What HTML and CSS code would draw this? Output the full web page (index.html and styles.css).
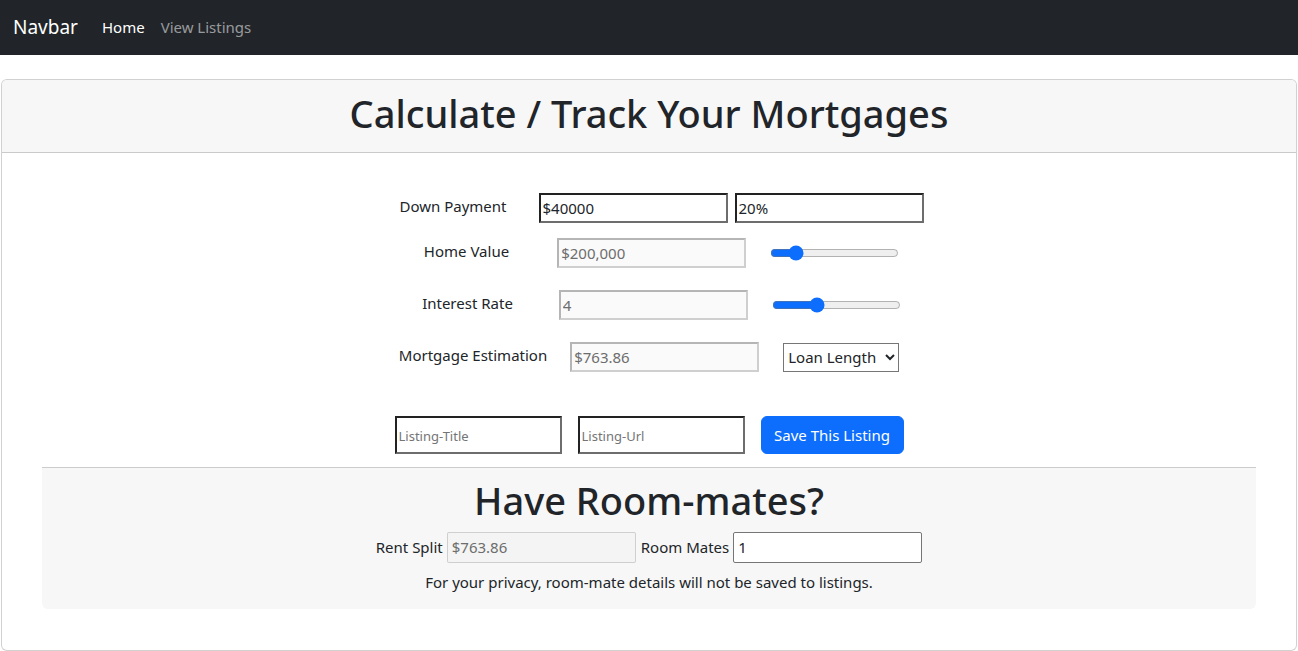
FILE: index.html
```html
<!DOCTYPE html>
<html lang="en">
<head>
<meta charset="utf-8">
<title>Mortgage Calculator</title>
<link rel="stylesheet" href="styles.css">
</head>
<body>
<nav class="navbar">
  <a class="brand" href="#">Navbar</a>
  <a class="nav-link active" href="#">Home</a>
  <a class="nav-link" href="#">View Listings</a>
</nav>
<div class="page">
  <div class="card">
    <div class="card-header">
      <h1>Calculate / Track Your Mortgages</h1>
    </div>
    <div class="card-body">
      <div class="row row-down">
        <label class="lbl lbl-down">Down Payment</label>
        <input class="inp" type="text" value="$40000">
        <input class="inp" type="text" value="20%">
      </div>
      <div class="row row-home">
        <label class="lbl lbl-home">Home Value</label>
        <input class="inp" type="text" value="$200,000" disabled>
        <input class="range" type="range" min="0" max="100" value="16">
      </div>
      <div class="row row-rate">
        <label class="lbl lbl-rate">Interest Rate</label>
        <input class="inp" type="text" value="4" disabled>
        <input class="range" type="range" min="0" max="100" value="33">
      </div>
      <div class="row row-est">
        <label class="lbl lbl-est">Mortgage Estimation</label>
        <input class="inp" type="text" value="$763.86" disabled>
        <select class="sel">
          <option>Loan Length</option>
        </select>
      </div>
      <div class="row row-save">
        <input class="inp inp-tall" type="text" placeholder="Listing-Title">
        <input class="inp inp-tall" type="text" placeholder="Listing-Url">
        <button class="btn">Save This Listing</button>
      </div>
      <div class="roommates">
        <h1>Have Room-mates?</h1>
        <div class="rm-row">
          <span>Rent Split</span>
          <input class="plain" type="text" value="$763.86" disabled>
          <span>Room Mates</span>
          <input class="plain" type="text" value="1">
        </div>
        <p class="note">For your privacy, room-mate details will not be saved to listings.</p>
      </div>
    </div>
  </div>
</div>
</body>
</html>
```
FILE: styles.css
```css
* { box-sizing: border-box; }
html, body { margin: 0; padding: 0; }
body {
  font-family: "Noto Sans", "Open Sans", sans-serif;
  font-size: 16px;
  line-height: 1.5;
  color: #212529;
  background: #fff;
}
.navbar {
  height: 55px;
  background: #212529;
  display: flex;
  align-items: center;
  padding: 0 13px;
}
.brand {
  color: #fff;
  text-decoration: none;
  font-size: 19px;
  margin-right: 24px;
}
.nav-link {
  color: rgba(255,255,255,0.55);
  text-decoration: none;
  font-size: 15px;
  margin-right: 16px;
}
.nav-link.active { color: #fff; }
.page { padding: 24px 1px 0 1px; }
.card {
  border: 1px solid rgba(0,0,0,0.18);
  border-radius: 6px;
  background: #fff;
  height: 572px;
}
.card-header {
  background: #f7f7f7;
  border-bottom: 1px solid rgba(0,0,0,0.18);
  border-radius: 5px 5px 0 0;
  height: 73px;
  text-align: center;
}
h1 {
  margin: 0;
  font-weight: 500;
  font-size: 38px;
  line-height: 1.2;
}
.card-header h1 { padding-top: 11px; }
.card-body { padding: 40px 0 0 0; }
.row {
  display: flex;
  justify-content: center;
  align-items: center;
}
.lbl { font-size: 15px; margin-top: -3px; }
.inp {
  width: 189px;
  height: 30px;
  font-family: inherit;
  font-size: 15px;
  padding: 1px 2px;
  border: 2px solid;
  border-color: #222 #6d6d6d #6d6d6d #222;
  background: #fff;
  color: #212529;
  border-radius: 0;
  outline: none;
}
.inp:disabled {
  border-color: #b5b5b5 #cfcfcf #cfcfcf #b5b5b5;
  background: #fafafa;
  color: #6d6d6d;
}
.inp::placeholder { color: #757575; font-size: 13px; }
.row-down { padding-left: 25px; }
.row-down .lbl { margin-right: 32px; }
.row-down .inp + .inp { margin-left: 7px; }
.row-home { margin-top: 15px; padding-left: 25px; }
.row-home .lbl { margin-right: 48px; }
.row-rate { margin-top: 22px; padding-left: 23px; }
.row-rate .lbl { margin-right: 46px; margin-left: 2px; }
.range {
  width: 129px;
  margin: 0 0 0 24px;
  accent-color: #0d6efd;
}
.row-est { margin-top: 22px; }
.row-est .lbl { margin-right: 23px; }
.sel {
  margin-left: 24px;
  width: 116px;
  height: 29px;
  font-family: inherit;
  font-size: 15px;
  color: #212529;
  background: #fff;
  border: 1px solid #767676;
  border-radius: 0;
}
.row-save { margin-top: 44px; gap: 16px; }
.inp-tall { width: 167px; height: 38px; }
.btn {
  background: #0d6efd;
  color: #fff;
  border: 1px solid #0d6efd;
  border-radius: 6px;
  width: 143px;
  height: 38px;
  font-family: inherit;
  font-size: 15px;
  padding: 0;
}
.roommates {
  margin: 13px 40px 0 40px;
  border-top: 1px solid #ccc;
  background: #f7f7f7;
  border-radius: 0 0 6px 6px;
  height: 142px;
  text-align: center;
  padding-top: 10px;
}
.rm-row {
  display: flex;
  justify-content: center;
  align-items: center;
  gap: 4px;
  margin-top: 8px;
  font-size: 15px;
  padding-left: 1px;
}
.plain {
  width: 189px;
  height: 31px;
  font-family: inherit;
  font-size: 15px;
  padding: 1px 4px;
  border: 1px solid #767676;
  border-radius: 2px;
  background: #fff;
  color: #212529;
}
.plain:disabled {
  border-color: rgba(118,118,118,0.3);
  background: rgba(239,239,239,0.3);
  color: #6d6d6d;
}
.rm-row span + .plain { margin-right: 1px; }
.note { margin: 8px 0 0 0; font-size: 15px; }
```
